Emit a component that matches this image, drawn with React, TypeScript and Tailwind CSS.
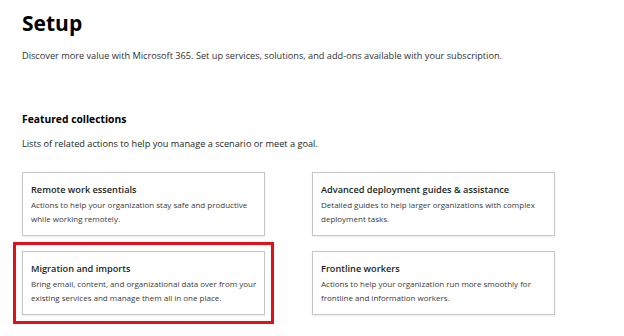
const cards = [
  {
    title: 'Remote work essentials',
    text: 'Actions to help your organization stay safe and productive while working remotely.',
  },
  {
    title: 'Advanced deployment guides & assistance',
    text: 'Detailed guides to help larger organizations with complex deployment tasks.',
  },
  {
    title: 'Migration and imports',
    text: 'Bring email, content, and organizational data over from your existing services and manage them all in one place.',
    marked: true,
  },
  {
    title: 'Frontline workers',
    text: 'Actions to help your organization run more smoothly for frontline and information workers.',
  },
]

function Card({ title, text, marked }: { title: string; text: string; marked?: boolean }) {
  return (
    <div
      className={`h-[64px] border border-[#c8c6c4] bg-white pl-[8px] pr-[3px] pt-[10px] shadow-[0_1px_2px_rgba(0,0,0,0.08)] ${
        marked ? 'outline-3 outline-offset-[6px] outline-[#e3101b]' : ''
      }`}
    >
      <div className="text-[9.2px] font-semibold leading-[14px] text-[#201f1e]">{title}</div>
      <p className="mt-[1px] text-[8px] leading-[14px] text-[#3b3a39]">{text}</p>
    </div>
  )
}

export default function App() {
  return (
    <div className="h-[336px] w-[624px] bg-white px-[22px] pt-[9px] font-['Open_Sans',sans-serif] text-[#201f1e]">
      <h1 className="text-[21px] font-bold leading-[28px] text-black">Setup</h1>
      <p className="mt-[13px] text-[9.2px] leading-[12px] text-[#323130]">
        Discover more value with Microsoft 365. Set up services, solutions, and add-ons available with your subscription.
      </p>

      <h2 className="mt-[50px] text-[10.3px] font-bold leading-[14px] text-black">Featured collections</h2>
      <p className="mt-[11px] text-[9.2px] leading-[13px] text-[#201f1e]">
        Lists of related actions to help you manage a scenario or meet a goal.
      </p>

      <div className="mt-[22px] grid grid-cols-[243px_243px] gap-x-[47px] gap-y-[15px]">
        {cards.map(c => (
          <Card key={c.title} {...c} />
        ))}
      </div>
    </div>
  )
}
